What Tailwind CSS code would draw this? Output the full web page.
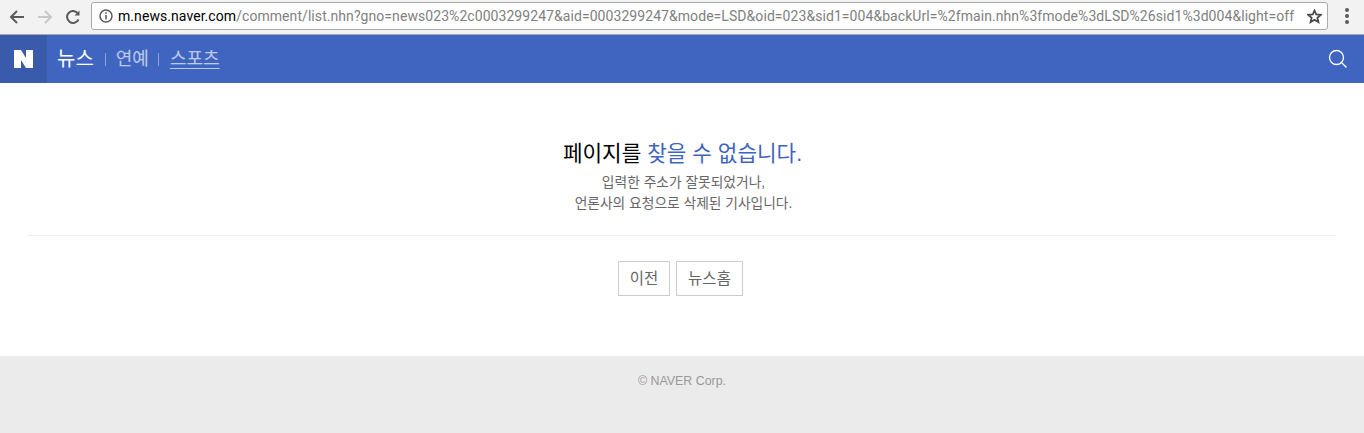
<!DOCTYPE html>
<html lang="ko">
<head>
    <meta charset="UTF-8">
    <meta name="viewport" content="width=device-width, initial-scale=1.0">
    <title>네이버 뉴스</title>
    <script src="https://cdn.jsdelivr.net/npm/@tailwindcss/browser@4"></script>
</head>
<body class="bg-white h-[433px] overflow-hidden flex flex-col font-['Liberation_Sans','Noto_Sans_CJK_KR',sans-serif]">
    <!-- Browser toolbar -->
    <div class="h-[35px] shrink-0 bg-[#f2f2f2] border-b border-[#a8a8a8] flex items-center">
        <div class="w-[91px] shrink-0 flex items-center">
            <svg class="ml-[9px] w-4 h-4" viewBox="0 0 16 16" fill="none" stroke="#5a5a5a" stroke-width="2"><path d="M15 8H2M8 2L2 8l6 6"/></svg>
            <svg class="ml-[12px] w-4 h-4" viewBox="0 0 16 16" fill="none" stroke="#c8c8c8" stroke-width="2"><path d="M1 8h13M8 2l6 6-6 6"/></svg>
            <svg class="ml-[12px] w-4 h-4" viewBox="0 0 16 16" fill="none" stroke="#5a5a5a" stroke-width="2"><path d="M13.5 10.5A6 6 0 1 1 13 4.5"/><path d="M14.5 1.5v5h-5" fill="#5a5a5a" stroke="none"/></svg>
        </div>
        <div class="w-[1237px] h-[28px] mb-[2px] shrink-0 bg-white border border-[#a9a9a9] rounded-[3px] flex items-center pl-[7px] pr-[5px]">
            <svg class="w-[14px] h-[14px] shrink-0" viewBox="0 0 14 14" fill="none" stroke="#5a5a5a" stroke-width="1.5"><circle cx="7" cy="7" r="6"/><path d="M7 6v4.5M7 3.2v1.6"/></svg>
            <div class="ml-[5px] text-[14px] tracking-[0.065px] text-[#7f7f7f] whitespace-nowrap font-['Roboto',sans-serif]"><span class="text-black">m.news.naver.com</span>/comment/list.nhn?gno=news023%2c0003299247&amp;aid=0003299247&amp;mode=LSD&amp;oid=023&amp;sid1=004&amp;backUrl=%2fmain.nhn%3fmode%3dLSD%26sid1%3d004&amp;light=off</div>
            <svg class="ml-auto w-[15px] h-[15px] shrink-0" viewBox="0 0 15 15" fill="none" stroke="#4a4a4a" stroke-width="1.8"><path d="M7.500 1.500l1.800 4 4.400.4-3.300 2.900 1 4.300-3.900-2.300-3.900 2.300 1-4.300L1.300 5.900l4.400-.4z"/></svg>
        </div>
        <div class="ml-[17px] flex flex-col gap-[2px] mb-[2px]">
            <span class="w-[4px] h-[4px] rounded-full bg-[#5a5a5a]"></span>
            <span class="w-[4px] h-[4px] rounded-full bg-[#5a5a5a]"></span>
            <span class="w-[4px] h-[4px] rounded-full bg-[#5a5a5a]"></span>
        </div>
    </div>

    <!-- Naver header -->
    <header class="h-[48px] shrink-0 bg-[#4065c0] flex items-center">
        <div class="w-[47px] h-full bg-[#3a5aab] flex items-center justify-center">
            <svg class="w-[19px] h-[18px]" viewBox="0 0 19 18" fill="#fff"><path d="M0 0h7l5 8V0h7v18h-7L7 10v8H0z"/></svg>
        </div>
        <nav class="flex items-center text-[18px] ml-[10px]">
            <span class="text-white text-[20px]">뉴스</span>
            <span class="w-px h-[13px] bg-white/40 ml-[11px] mr-[10px]"></span>
            <span class="text-white/65">연예</span>
            <span class="w-px h-[13px] bg-white/40 ml-[9px] mr-[11px]"></span>
            <span class="text-white/65 underline underline-offset-[3px] decoration-1">스포츠</span>
        </nav>
        <svg class="ml-auto mr-[16px] w-[20px] h-[20px]" viewBox="0 0 20 20" fill="none" stroke="#fff" stroke-width="1.3"><circle cx="8.500" cy="8.500" r="7"/><path d="M13.500 13.500l5 5"/></svg>
    </header>

    <!-- Message -->
    <main class="flex-1 pl-[28px] pr-[28px]">
        <div class="pt-[56px] pb-[21px] border-b border-[#f0f0f0] text-center">
            <h1 class="ml-[1px] text-[21.3px] leading-[30px] text-black font-normal">페이지를 <span class="text-[#3f64c0]">찾을 수 없습니다.</span></h1>
            <p class="mt-[3px] ml-[3px] text-[13.75px] leading-[21px] text-[#666]">입력한 주소가 잘못되었거나,<br>언론사의 요청으로 삭제된 기사입니다.</p>
        </div>
        <div class="mt-[25px] mr-[3px] flex justify-center gap-[6px]">
            <a class="w-[52px] h-[35px] border border-[#ccc] flex items-center justify-center text-[15.5px] text-[#666]">이전</a>
            <a class="w-[67px] h-[35px] border border-[#ccc] flex items-center justify-center text-[15.5px] text-[#666]">뉴스홈</a>
        </div>
    </main>

    <!-- Footer -->
    <footer class="h-[77px] shrink-0 bg-[#ebebeb] pt-[17px] text-center text-[12.4px] leading-[16px] text-[#999]">© NAVER Corp.</footer>
</body>
</html>
